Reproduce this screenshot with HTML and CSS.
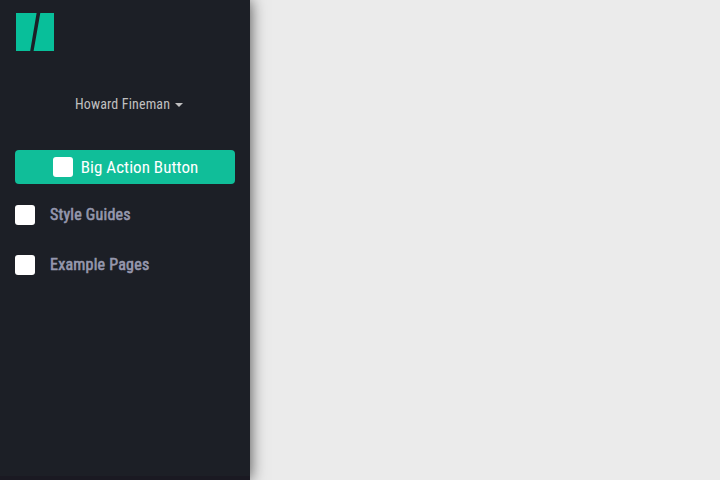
FILE: index.html
```html
<!DOCTYPE html>
<html lang="en">
<head>
<meta charset="utf-8">
<title>Style Guide</title>
<link rel="stylesheet" href="styles.css">
</head>
<body>
<aside class="sidebar">
  <svg class="logo" viewBox="0 0 38 38" aria-hidden="true"><path d="M0 0H20.6L14.2 38H0ZM24.3 0H38V38H17.6Z"/></svg>
  <div class="user"><span class="user-name">Howard Fineman</span><span class="caret"></span></div>
  <button class="action"><span class="icon"></span><span class="action-label">Big Action Button</span></button>
  <nav class="nav">
    <a class="nav-item"><span class="icon"></span><span class="guides">Style Guides</span></a>
    <a class="nav-item"><span class="icon"></span><span class="pages">Example Pages</span></a>
  </nav>
  <div class="footer"></div>
</aside>
<main class="content"></main>
</body>
</html>
```

FILE: styles.css
```css
* { box-sizing: border-box; }
body {
  margin: 0;
  height: 480px;
  display: flex;
  overflow: hidden;
  background: #ebebeb;
  font-family: "Roboto Condensed", Roboto, sans-serif;
  font-stretch: 75%;
}
.sidebar {
  width: 250px;
  height: 480px;
  padding: 13px 15px 0;
  display: flex;
  flex-direction: column;
  background: #1c1f26;
  box-shadow: 0 0 15px rgba(0, 0, 0, 0.7);
}
.content { flex: 1; }
.logo { width: 38px; height: 38px; margin-left: 1px; fill: #08bf9a; }
.user {
  height: 20px;
  margin: 43px 0 36px 60px;
  display: flex;
  align-items: center;
  color: #c0c0c0;
  font-size: 14px;
  line-height: 20px;
  letter-spacing: 0.14px;
}
.caret {
  margin: 1px 0 0 5px;
  border: 4px solid transparent;
  border-top-color: #c0c0c0;
  border-bottom: 0;
}
.action {
  height: 34px;
  padding: 0 0 0 1px;
  border: 0;
  border-radius: 4px;
  display: flex;
  align-items: center;
  justify-content: center;
  gap: 8px;
  background: #10be99;
  color: #fff;
  font: inherit;
  font-stretch: 75%;
  font-size: 17px;
  letter-spacing: 0.04px;
}
.icon { width: 20px; height: 20px; border-radius: 3px; background: #fff; }
.nav { margin-top: 21px; display: flex; flex-direction: column; gap: 30px; }
.nav-item {
  height: 20px;
  display: flex;
  align-items: center;
  gap: 15px;
  color: #9698ae;
  font-size: 16px;
  letter-spacing: 0.22px;
  line-height: 18px;
  -webkit-text-stroke: 0.6px #9698ae;
}
.footer { height: 4px; margin: auto -15px 0; background: #1a1922; }
```
